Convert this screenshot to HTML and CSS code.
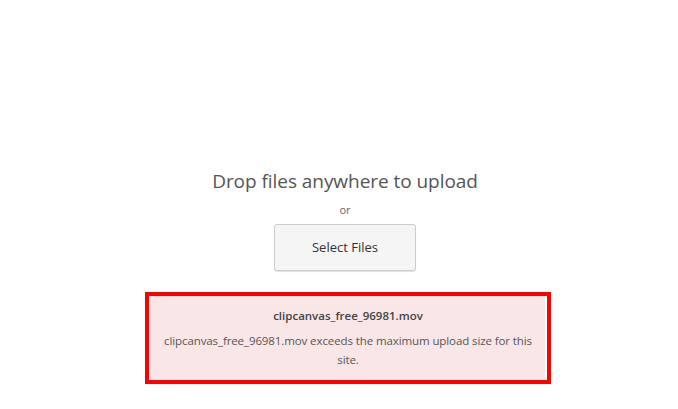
FILE: index.html
```html
<!DOCTYPE html>
<html>
<head>
<meta charset="utf-8">
<link rel="stylesheet" href="styles.css">
</head>
<body>
<div class="page">
  <div class="drop">
    <h1 class="drop-title">Drop files anywhere to upload</h1>
    <p class="drop-or">or</p>
    <button class="select-btn" type="button">Select Files</button>
  </div>
  <div class="error">
    <p class="error-name">clipcanvas_free_96981.mov</p>
    <p class="error-msg">clipcanvas_free_96981.mov exceeds the maximum upload size for this site.</p>
  </div>
</div>
</body>
</html>
```
FILE: styles.css
```css
html, body {
  margin: 0;
  padding: 0;
  background: #fff;
}
body {
  font-family: "Open Sans", "Noto Sans", sans-serif;
  color: #555;
}
.page {
  width: 678px;
  height: 409px;
  box-sizing: border-box;
  padding: 166px 0 0 12px;
  display: flex;
  flex-direction: column;
  align-items: center;
}
.drop {
  display: flex;
  flex-direction: column;
  align-items: center;
}
.drop-title {
  margin: 0;
  font-size: 19px;
  font-weight: 400;
  line-height: 30px;
  color: #555;
  letter-spacing: -0.05px;
}
.drop-or {
  margin: 6px 0 0;
  font-size: 11px;
  line-height: 16px;
  color: #666;
}
.select-btn {
  margin-top: 6px;
  width: 142px;
  height: 47px;
  font-family: inherit;
  font-size: 13px;
  color: #333;
  background: #f5f5f5;
  border: 1px solid #ccc;
  border-radius: 3px;
  box-shadow: 0 1px 1px rgba(0,0,0,0.12);
  padding-bottom: 2px;
}
.error {
  margin-top: 21px;
  margin-left: 6px;
  width: 406px;
  height: 92px;
  box-sizing: border-box;
  border: 4px solid #f00;
  background: #f9e7e7;
  box-shadow: inset -2px 0 0 #fff;
  padding: 11px 6px 0;
  text-align: center;
}
.error-name {
  margin: 0;
  font-size: 11.5px;
  font-weight: 600;
  line-height: 18px;
  color: #444;
}
.error-msg {
  margin: 6px 0 0;
  font-size: 11.5px;
  line-height: 19px;
  color: #555;
  letter-spacing: -0.1px;
}
```
